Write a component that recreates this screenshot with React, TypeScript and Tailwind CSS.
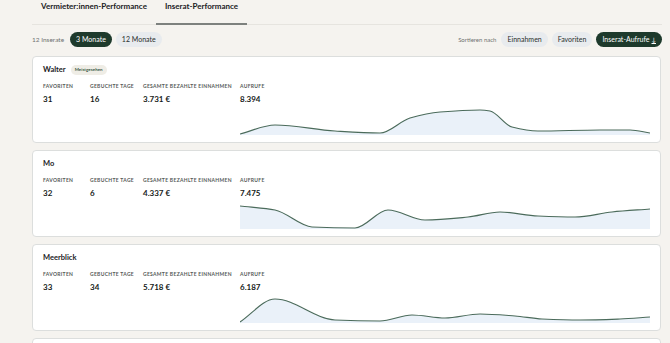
import React from 'react';

type Pt = [number, number];

const listings: {
    name: string;
    badge?: string;
    favoriten: string;
    tage: string;
    einnahmen: string;
    aufrufe: string;
    points: Pt[];
}[] = [
    {
        name: 'Walter',
        badge: 'Meistgesehen',
        favoriten: '31',
        tage: '16',
        einnahmen: '3.731 €',
        aufrufe: '8.394',
        points: [[0, 27], [35, 18], [95, 24], [140, 26], [170, 11], [200, 5], [240, 3], [250, 4], [272, 20], [298, 24], [360, 23], [390, 23], [410, 26]],
    },
    {
        name: 'Mo',
        favoriten: '32',
        tage: '6',
        einnahmen: '4.337 €',
        aufrufe: '7.475',
        points: [[0, 5], [35, 9], [72, 26], [115, 27], [148, 9], [185, 19], [228, 16], [260, 11], [298, 15], [335, 16], [372, 11], [410, 8]],
    },
    {
        name: 'Meerblick',
        favoriten: '33',
        tage: '34',
        einnahmen: '5.718 €',
        aufrufe: '6.187',
        points: [[0, 27], [35, 4], [95, 25], [140, 26], [172, 20], [205, 23], [240, 19], [275, 21], [302, 24], [340, 25], [380, 24], [410, 22]],
    },
];

// monotone cubic, like d3.curveMonotoneX
const linePath = (pts: Pt[]) => {
    const n = pts.length;
    const d: number[] = [];
    for (let i = 0; i < n - 1; i++) {
        d.push((pts[i + 1][1] - pts[i][1]) / (pts[i + 1][0] - pts[i][0]));
    }
    const m: number[] = [];
    for (let i = 0; i < n; i++) {
        if (i === 0) m.push(d[0]);
        else if (i === n - 1) m.push(d[n - 2]);
        else if (d[i - 1] * d[i] <= 0) m.push(0);
        else m.push((2 * d[i - 1] * d[i]) / (d[i - 1] + d[i]));
    }
    let p = `M${pts[0][0]},${pts[0][1]}`;
    for (let i = 0; i < n - 1; i++) {
        const h = (pts[i + 1][0] - pts[i][0]) / 3;
        p += ` C${pts[i][0] + h},${pts[i][1] + m[i] * h} ${pts[i + 1][0] - h},${pts[i + 1][1] - m[i + 1] * h} ${pts[i + 1][0]},${pts[i + 1][1]}`;
    }
    return p;
};

const Sparkline: React.FC<{ points: Pt[] }> = ({ points }) => {
    const line = linePath(points);
    const area = `${line} L410,28 L0,28 Z`;
    return (
        <svg className="mt-[3px] block h-[28px] w-full" viewBox="0 0 410 28" preserveAspectRatio="none">
            <path d={area} fill="#eaf1f9" />
            <path d={line} fill="none" stroke="#4b6b5b" strokeWidth="1.2" />
        </svg>
    );
};

const Stat: React.FC<{ label: string; value: string; children?: React.ReactNode }> = ({ label, value, children }) => (
    <div className="flex flex-col">
        <div className="h-[8px] text-[5px] leading-[8px] font-bold uppercase tracking-[0.3px] text-[#555a57]">{label}</div>
        <div className="mt-[4px] h-[10px] text-[8px] leading-[10px] font-bold text-[#161b18]">{value}</div>
        {children}
    </div>
);

const Pill: React.FC<{ active?: boolean; children: React.ReactNode }> = ({ active, children }) => (
    <span
        className={
            active
                ? 'flex h-[15px] items-center rounded-full bg-[#1e3a2c] px-[6px] text-[7px] text-white'
                : 'flex h-[15px] items-center rounded-full bg-[#e8ebee] px-[6px] text-[7px] text-[#2a302d]'
        }
    >
        {children}
    </span>
);

export default function App() {
    return (
        <div className="h-[343px] w-[670px] overflow-hidden bg-[#f5f3ef] pl-[32px] pr-[8px] text-[#1b211e]" style={{ fontFamily: 'Lato, "Noto Sans", sans-serif' }}>
            {/* Tabs */}
            <div className="flex h-[25px] border-b border-[#e6e4df]">
                <div className="h-[24px] px-[9px] text-[8px] leading-[12px] font-bold">Vermieter:innen-Performance</div>
                <div className="h-[25px] border-b-2 border-[#7d817e] px-[9px] text-[8px] leading-[12px] font-bold">Inserat-Performance</div>
            </div>

            {/* Controls */}
            <div className="mt-[7px] flex h-[15px] items-center justify-between">
                <div className="flex items-center">
                    <span className="mr-[6px] text-[6.5px] text-[#6e716f]">12 Inserate</span>
                    <Pill active>3 Monate</Pill>
                    <span className="w-[4px]" />
                    <Pill>12 Monate</Pill>
                </div>
                <div className="flex items-center gap-[4px]">
                    <span className="mr-[1px] text-[6px] text-[#6e716f]">Sortieren nach</span>
                    <Pill>Einnahmen</Pill>
                    <Pill>Favoriten</Pill>
                    <Pill active>
                        Inserat-Aufrufe <span className="ml-[2px] text-[6px] underline">↓</span>
                    </Pill>
                </div>
            </div>

            {/* Cards */}
            <div className="mt-[9px] flex w-[629px] flex-col gap-[7px]">
                {listings.map((l) => (
                    <div key={l.name} className="rounded-[4px] border border-[#dcdedd] bg-white px-[10px] pt-[7px] pb-[7px]">
                        <div className="flex h-[12px] items-center gap-[5px]">
                            <span className="text-[7.5px] font-bold">{l.name}</span>
                            {l.badge && (
                                <span className="flex h-[10px] items-center rounded-full bg-[#efede6] px-[4px] text-[4.5px] font-bold text-[#3d5c4a]">{l.badge}</span>
                            )}
                        </div>
                        <div className="mt-[6px] grid grid-cols-[47px_53px_97px_1fr]">
                            <Stat label="Favoriten" value={l.favoriten} />
                            <Stat label="Gebuchte Tage" value={l.tage} />
                            <Stat label="Gesamte bezahlte Einnahmen" value={l.einnahmen} />
                            <Stat label="Aufrufe" value={l.aufrufe}>
                                <Sparkline points={l.points} />
                            </Stat>
                        </div>
                    </div>
                ))}
                <div className="h-[88px] rounded-[4px] border border-[#dcdedd] bg-white" />
            </div>
        </div>
    );
}
